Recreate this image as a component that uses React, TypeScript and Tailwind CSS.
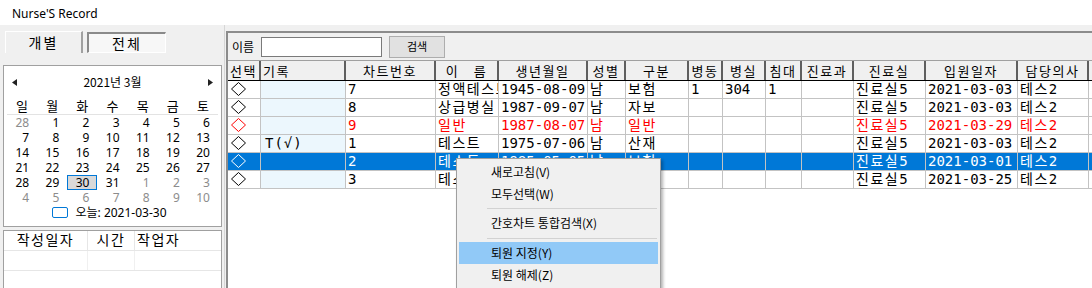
import React from 'react'

type Row = {
  rec?: string
  chart: string
  name: string
  birth: string
  sex: string
  kind: string
  ward?: string
  room?: string
  bed?: string
  clinic: string
  admit: string
  doctor: string
  red?: boolean
  selected?: boolean
}

const columns = [
  { key: 'sel', title: '선택', width: 'w-[33px]' },
  { key: 'rec', title: '기록', width: 'w-[85px]', left: true },
  { key: 'chart', title: '차트번호', width: 'w-[90px]' },
  { key: 'name', title: '이　름', width: 'w-[63px]' },
  { key: 'birth', title: '생년월일', width: 'w-[89px]' },
  { key: 'sex', title: '성별', width: 'w-[38px]' },
  { key: 'kind', title: '구분', width: 'w-[63px]' },
  { key: 'ward', title: '병동', width: 'w-[34px]' },
  { key: 'room', title: '병실', width: 'w-[43px]' },
  { key: 'bed', title: '침대', width: 'w-[36px]' },
  { key: 'dept', title: '진료과', width: 'w-[52px]' },
  { key: 'clinic', title: '진료실', width: 'w-[72px]' },
  { key: 'admit', title: '입원일자', width: 'w-[92px]' },
  { key: 'doctor', title: '담당의사', width: 'w-[71px]' }
]

const rows: Row[] = [
  { chart: '7', name: '정액테스트', birth: '1945-08-09', sex: '남', kind: '보험', ward: '1', room: '304', bed: '1', clinic: '진료실5', admit: '2021-03-03', doctor: '테스2' },
  { chart: '8', name: '상급병실', birth: '1987-09-07', sex: '남', kind: '자보', clinic: '진료실5', admit: '2021-03-03', doctor: '테스2' },
  { chart: '9', name: '일반', birth: '1987-08-07', sex: '남', kind: '일반', clinic: '진료실5', admit: '2021-03-29', doctor: '테스2', red: true },
  { rec: 'T(√)', chart: '1', name: '테스트', birth: '1975-07-06', sex: '남', kind: '산재', clinic: '진료실5', admit: '2021-03-03', doctor: '테스2' },
  { chart: '2', name: '테스트', birth: '1985-05-05', sex: '남', kind: '보험', clinic: '진료실5', admit: '2021-03-01', doctor: '테스2', selected: true },
  { chart: '3', name: '테스트', birth: '1990-01-01', sex: '여', kind: '보험', clinic: '진료실5', admit: '2021-03-25', doctor: '테스2' }
]

const weeks = [
  [[28, 0], [1, 1], [2, 1], [3, 1], [4, 1], [5, 1], [6, 1]],
  [[7, 1], [8, 1], [9, 1], [10, 1], [11, 1], [12, 1], [13, 1]],
  [[14, 1], [15, 1], [16, 1], [17, 1], [18, 1], [19, 1], [20, 1]],
  [[21, 1], [22, 1], [23, 1], [24, 1], [25, 1], [26, 1], [27, 1]],
  [[28, 1], [29, 1], [30, 1], [31, 1], [1, 0], [2, 0], [3, 0]],
  [[4, 0], [5, 0], [6, 0], [7, 0], [8, 0], [9, 0], [10, 0]]
]

// korean runs get the wide spacing of the old grid font
const Ko = ({ text }: { text: string }) => (
  <>
    {text.split(/([\uac00-\ud7a3]+)/).map((part, i) =>
      /[\uac00-\ud7a3]/.test(part) ? (
        <span key={i} className="tracking-[1.5px]">
          {part}
        </span>
      ) : (
        <span key={i}>{part}</span>
      )
    )}
  </>
)

// the hollow diamond used as the row checkbox
const Diamond = () => (
  <svg width="15" height="14" viewBox="0 0 15 14" className="ml-[1px] mt-[1px]">
    <polygon points="7.5,0.5 14.5,7 7.5,13.5 0.5,7" fill="none" stroke="currentColor" strokeWidth="1" />
  </svg>
)

const Calendar = () => {
  return (
    <div className="mx-[3px] mt-[12px] h-[162px] w-[219px] border border-[#a0a0a0] bg-white font-['Noto_Sans','Noto_Sans_CJK_KR',sans-serif] text-black">
      <div className="flex h-[32px] items-center justify-between px-[8px]">
        <svg width="5" height="7" viewBox="0 0 5 7">
          <polygon points="5,0 5,7 0,3.5" fill="#222" />
        </svg>
        <span className="font-['Noto_Sans_CJK_KR',sans-serif] text-[12px]">
          2021년 3월
        </span>
        <svg width="5" height="7" viewBox="0 0 5 7">
          <polygon points="0,0 0,7 5,3.5" fill="#222" />
        </svg>
      </div>
      <div className="mx-[3px] grid h-[17px] grid-cols-7 border-b border-[#e3e3e3] font-['Noto_Sans_CJK_KR',sans-serif] text-[13px] leading-[16px]">
        {['일', '월', '화', '수', '목', '금', '토'].map((d) => (
          <span key={d} className="text-center">
            {d}
          </span>
        ))}
      </div>
      <div className="px-[3px]">
        {weeks.map((week, wi) => (
          <div key={wi} className="grid h-[15px] grid-cols-7 text-[12px] leading-[15px]">
            {week.map(([day, cur], di) => {
              const picked = wi === 4 && day === 30
              return (
                <span
                  key={di}
                  className={
                    picked
                      ? 'border border-[#0078d7] bg-[#d9d9d9] pr-[7px] text-right leading-[13px]'
                      : cur
                        ? 'pr-[8px] text-right'
                        : 'pr-[8px] text-right text-[#8c8c8c]'
                  }
                >
                  {day}
                </span>
              )
            })}
          </div>
        ))}
      </div>
      <div className="flex h-[15px] items-center justify-center gap-[7px] pr-[6px] text-[12px]">
        <span className="h-[11px] w-[16px] rounded-[2px] border-[1.5px] border-[#0078d7]" />
        <span>오늘: 2021-03-30</span>
      </div>
    </div>
  )
}

const LogGrid = () => {
  return (
    <div className="mx-[3px] mt-[3px] h-[70px] w-[219px] border border-[#a0a0a0] bg-white font-['DejaVu_Sans_Mono','Noto_Sans_CJK_KR',monospace] text-[14px]">
      <div className="flex h-[20px] border-b border-[#e6e6e6] leading-[19px]">
        <span className="w-[84px] border-r border-[#e6e6e6] text-center">
          <Ko text="작성일자" />
        </span>
        <span className="w-[47px] border-r border-[#e6e6e6] text-center">
          <Ko text="시간" />
        </span>
        <span className="pl-[2px]">
          <Ko text="작업자" />
        </span>
      </div>
      <div className="flex h-[20px] border-b border-[#e6e6e6]">
        <span className="w-[84px] border-r border-[#f0f0f0]" />
        <span className="w-[47px] border-r border-[#f0f0f0]" />
      </div>
    </div>
  )
}

const cellValue = (row: Row, key: string) => {
  switch (key) {
    case 'rec':
      return row.rec ?? ''
    case 'chart':
      return row.chart
    case 'name':
      return row.name
    case 'birth':
      return row.birth
    case 'sex':
      return row.sex
    case 'kind':
      return row.kind
    case 'ward':
      return row.ward ?? ''
    case 'room':
      return row.room ?? ''
    case 'bed':
      return row.bed ?? ''
    case 'clinic':
      return row.clinic
    case 'admit':
      return row.admit
    case 'doctor':
      return row.doctor
    default:
      return ''
  }
}

const PatientGrid = () => {
  return (
    <div className="flex-1 border-t border-[#a0a0a0] bg-white font-['DejaVu_Sans_Mono','Noto_Sans_CJK_KR',monospace] text-[14px]">
      <div className="flex h-[20px] border-b border-black bg-[#f0f0f0] font-['Noto_Sans_CJK_KR',sans-serif] text-[13px] leading-[19px]">
        {columns.map((col) => (
          <div
            key={col.key}
            className={`${col.width} shrink-0 overflow-hidden whitespace-pre border-r-2 border-[#5f5f5f] tracking-[1.5px] ${col.left ? 'pl-[2px] text-left' : 'text-center'}`}
          >
            {col.title}
          </div>
        ))}
      </div>
      {rows.map((row, ri) => (
        <div
          key={ri}
          className={`flex h-[18px] border-b border-[#c3c3c3] leading-[17px] ${row.selected ? 'bg-[#0078d7] text-white' : row.red ? 'text-[#ff0000]' : 'text-black'}`}
        >
          {columns.map((col) => (
            <div
              key={col.key}
              className={`${col.width} shrink-0 overflow-hidden whitespace-nowrap border-r border-[#c3c3c3] pl-[2px] ${col.key === 'rec' && !row.selected ? 'bg-[#ecf7fd]' : ''}`}
            >
              {col.key === 'sel' ? (
                <Diamond />
              ) : col.key === 'rec' ? (
                <span className="pl-[2px] tracking-[1px]">{cellValue(row, col.key)}</span>
              ) : (
                <Ko text={cellValue(row, col.key)} />
              )}
            </div>
          ))}
        </div>
      ))}
    </div>
  )
}

const menuItem = 'mx-[2px] flex h-[22px] items-center pl-[32px]'
const menuSep = 'ml-[30px] mr-[3px] flex items-center'

const ContextMenu = () => {
  return (
    <div className="absolute left-[456px] top-[158px] h-[140px] w-[205px] border border-[#a0a0a0] bg-[#f0f0f0] pt-[2px] font-['Noto_Sans_CJK_KR',sans-serif] text-[12px] text-black shadow-[2px_2px_3px_rgba(0,0,0,0.3)]">
      <div className={menuItem}>새로고침(V)</div>
      <div className={menuItem}>모두선택(W)</div>
      <div className={`${menuSep} h-[7px]`}>
        <div className="h-px w-full bg-[#d2d2d2]" />
      </div>
      <div className={menuItem}>간호차트 통합검색(X)</div>
      <div className={`${menuSep} h-[8px]`}>
        <div className="h-px w-full bg-[#d2d2d2]" />
      </div>
      <div className={`${menuItem} bg-[#91c9f7]`}>퇴원 지정(Y)</div>
      <div className={menuItem}>퇴원 해제(Z)</div>
    </div>
  )
}

const App = () => {
  return (
    <div className="relative h-[288px] w-[1092px] overflow-hidden bg-[#f0f0f0] text-black">
      <header className="flex h-[25px] items-center bg-white pl-[12px] pt-[3px] font-['Noto_Sans',sans-serif] text-[12px]">
        Nurse'S Record
      </header>
      <div className="flex h-[263px]">
        <aside className="w-[225px] shrink-0 border-r border-[#d6d6d6] pt-[6px]">
          <div className="flex h-[22px] pl-[5px] font-['Noto_Sans_CJK_KR',sans-serif] text-[14px]">
            <div className="flex h-[22px] w-[78px] items-center justify-center border-l border-t border-r-2 border-l-white border-t-white border-r-[#a0a0a0] tracking-[2px]">
              개별
            </div>
            <div className="ml-[4px] mt-[1px] flex h-[21px] w-[79px] items-center justify-center border-l-2 border-t-2 border-r border-b border-l-[#8a8a8a] border-t-[#8a8a8a] border-r-white border-b-white bg-[#f7f7f7] tracking-[2px]">
              전체
            </div>
          </div>
          <Calendar />
          <LogGrid />
        </aside>
        <main className="ml-[1px] mt-[6px] flex flex-1 flex-col border-l-2 border-t-2 border-[#8c8c8c]">
          <div className="flex h-[27px] items-center pl-[4px] font-['Noto_Sans_CJK_KR',sans-serif]">
            <span className="text-[12px]">이름</span>
            <div className="ml-[7px] h-[20px] w-[121px] border border-[#7a7a7a] bg-white" />
            <button className="ml-[7px] h-[22px] w-[56px] border border-[#adadad] bg-[#e1e1e1] text-[11px]">
              검색
            </button>
          </div>
          <PatientGrid />
        </main>
      </div>
      <ContextMenu />
    </div>
  )
}

export default App
